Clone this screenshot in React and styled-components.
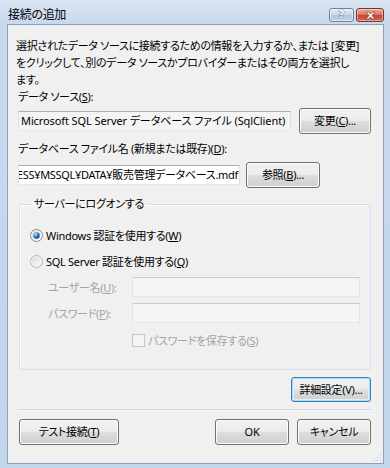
import React from "react"
import styled, { createGlobalStyle } from "styled-components"

const GlobalStyle = createGlobalStyle`
  html, body {
    margin: 0;
    padding: 0;
    background: #c4d5ea;
  }
  body {
    font-family: "Noto Sans", "Noto Sans CJK JP", sans-serif;
    font-size: 11px;
    letter-spacing: -0.3px;
    color: #000;
    font-feature-settings: "palt";
  }
`

const Window = styled.div`
  width: 390px;
  height: 468px;
  box-sizing: border-box;
  display: flex;
  flex-direction: column;
  padding: 0 6px 4px 7px;
  background: linear-gradient(#dae5f3 0, #c8d9ee 24px, #c3d5eb 100%);
`

const TitleBar = styled.div`
  height: 24px;
  display: flex;
  align-items: flex-start;
`

const Title = styled.div`
  margin: 7px 0 0 1px;
  line-height: 16px;
  font-size: 12px;
  flex: 1;
`

const CaptionButton = styled.div`
  margin-top: 8px;
  height: 14px;
  width: ${props => (props.$close ? 28 : 25)}px;
  margin-left: ${props => (props.$close ? 2 : 0)}px;
  box-sizing: border-box;
  border-radius: 3px;
  border: 1px solid ${props => (props.$close ? "#7d3427" : "#6e829c")};
  background: ${props =>
    props.$close
      ? "linear-gradient(#e7a899 0%, #d9806d 45%, #c4442f 50%, #d0685a 100%)"
      : "linear-gradient(#e5edf6 0%, #cbd8e8 45%, #b3c5db 50%, #c5d4e6 100%)"};
  box-shadow: inset 0 0 0 1px rgba(255, 255, 255, 0.45);
  display: flex;
  align-items: center;
  justify-content: center;
  color: #fff;
  font-family: "DejaVu Sans", sans-serif;
  font-weight: bold;
  font-size: 11px;
  letter-spacing: 0;
  line-height: 12px;
  text-shadow: 0 0 1px #3b4b61, 0 0 1px #3b4b61;
`

const Client = styled.div`
  flex: 1;
  position: relative;
  background: #f0f0f0;
  border: 1px solid #8ba1bd;
  padding: 12px 12px 0 10px;
  display: flex;
  flex-direction: column;
`

const Intro = styled.div`
  margin-left: -2px;
  line-height: 17px;
  white-space: nowrap;
`

const Line = styled.span`
  display: block;
`

const Label = styled.div`
  line-height: 16px;
  margin-top: ${props => props.$top}px;
  white-space: nowrap;
`

const Key = styled.span`
  text-decoration: underline;
  text-underline-offset: 1px;
`

const Row = styled.div`
  display: flex;
  align-items: center;
  gap: ${props => props.$gap}px;
  height: 26px;
  margin-top: ${props => props.$top}px;
`

const Field = styled.div`
  height: 20px;
  box-sizing: border-box;
  width: ${props => (props.$width ? `${props.$width}px` : "auto")};
  flex: ${props => (props.$width ? "none" : 1)};
  min-width: 0;
  border: 1px solid;
  border-color: ${props =>
    props.$disabled
      ? "#c9cbcf #dfe2e6 #e3e6ea #dfe2e6"
      : "#abadb3 #dbdfe6 #e3e9ef #e2e3ea"};
  background: ${props => (props.$white ? "#fff" : "#f4f4f4")};
  display: flex;
  align-items: center;
  justify-content: ${props => (props.$end ? "flex-end" : "flex-start")};
  padding: 0 ${props => (props.$end ? 1 : 2)}px 0 2px;
  overflow: hidden;
  white-space: nowrap;
  line-height: 16px;
  letter-spacing: ${props => (props.$end ? "-0.3px" : "-0.1px")};
`

const Button = styled.button`
  font: inherit;
  letter-spacing: inherit;
  color: #000;
  width: ${props => props.$w}px;
  height: ${props => props.$h || 26}px;
  flex: none;
  padding: 0;
  border-radius: 3px;
  border: 1px solid ${props => (props.$focused ? "#3c7fb1" : "#707070")};
  background: linear-gradient(#f2f2f2 0%, #ebebeb 48%, #dddddd 52%, #cfcfcf 100%);
  box-shadow: ${props =>
    props.$focused
      ? "inset 0 0 0 1px #9fdcf8, inset 0 0 0 2px #dff3fc"
      : "inset 0 0 0 1px #fbfbfb"};
  line-height: 16px;
  white-space: nowrap;
`

const Group = styled.fieldset`
  margin: 8px 0 0 1px;
  padding: 15px 10px 21px 10px;
  border: 1px solid #d5dfe5;
  border-radius: 3px;
  box-shadow: inset 1px 1px 0 #fff;
  min-width: 0;
`

const Legend = styled.legend`
  padding: 0 2px;
  margin-left: 2px;
  line-height: 16px;
`

const OptionRow = styled.label`
  display: flex;
  align-items: center;
  gap: 3px;
  height: 16px;
  margin-top: ${props => props.$top || 0}px;
  margin-left: ${props => props.$indent || 0}px;
  color: ${props => (props.$disabled ? "#a3a3a3" : "#000")};
  white-space: nowrap;
`

const CredRow = styled.div`
  display: flex;
  align-items: center;
  height: 20px;
  margin-top: ${props => props.$top}px;
  padding-left: 18px;
`

const CredLabel = styled.span`
  width: 84px;
  flex: none;
  color: #a3a3a3;
  white-space: nowrap;
`

const RightRow = styled.div`
  display: flex;
  justify-content: flex-end;
  margin-top: 7px;
`

const Separator = styled.div`
  height: 1px;
  background: #d5d5d5;
  margin-top: 7px;
  box-shadow: 0 1px 0 #fbfbfb;
`

const Footer = styled.div`
  display: flex;
  align-items: center;
  gap: 8px;
  margin-top: 9px;
`

const Spacer = styled.div`
  flex: 1;
`

const Grip = styled.svg`
  position: absolute;
  right: 1px;
  bottom: 1px;
`

const Radio = ({ checked }) => (
  <svg width="13" height="13" viewBox="0 0 13 13">
    <defs>
      <radialGradient id="rdot" cx="35%" cy="30%" r="75%">
        <stop offset="0" stopColor="#c6ecfd" />
        <stop offset="0.45" stopColor="#3d8fd6" />
        <stop offset="1" stopColor="#0b3b78" />
      </radialGradient>
      <linearGradient id="rbg" x1="0" y1="0" x2="1" y2="1">
        <stop offset="0" stopColor="#d6d6d6" />
        <stop offset="1" stopColor="#fdfdfd" />
      </linearGradient>
    </defs>
    <circle cx="6.5" cy="6.5" r="6" fill="#f6f6f6" stroke={checked ? "#8b8b8b" : "#b2b2b2"} />
    <circle cx="6.5" cy="6.5" r="4.6" fill="url(#rbg)" />
    {checked && <circle cx="6.5" cy="6.5" r="3.2" fill="url(#rdot)" />}
  </svg>
)

const CheckBox = () => (
  <svg width="13" height="13" viewBox="0 0 13 13">
    <rect x="0.5" y="0.5" width="12" height="12" fill="#f4f4f4" stroke="#c4c4c4" />
  </svg>
)

const CloseGlyph = () => (
  <svg width="11" height="9" viewBox="0 0 11 9">
    <path
      d="M1 1 L3.5 1 L5.5 3 L7.5 1 L10 1 L7 4.5 L10 8 L7.5 8 L5.5 6 L3.5 8 L1 8 L4 4.5 Z"
      fill="#fff"
      stroke="#6b2418"
      strokeWidth="0.6"
      strokeLinejoin="round"
    />
  </svg>
)

export default function App() {
  return (
    <>
      <GlobalStyle />
      <Window>
        <TitleBar>
          <Title>接続の追加</Title>
          <CaptionButton>?</CaptionButton>
          <CaptionButton $close>
            <CloseGlyph />
          </CaptionButton>
        </TitleBar>
        <Client>
          <Intro>
            <Line>選択されたデータ ソースに接続するための情報を入力するか、または [変更]</Line>
            <Line>をクリックして、別のデータ ソースかプロバイダーまたはその両方を選択し</Line>
            <Line>ます。</Line>
          </Intro>

          <Label $top={1}>
            データ ソース(<Key>S</Key>):
          </Label>
          <Row $top={3} $gap={8}>
            <Field>Microsoft SQL Server データベース ファイル (SqlClient)</Field>
            <Button $w={72}>
              変更(<Key>C</Key>)...
            </Button>
          </Row>

          <Label $top={7}>
            データベース ファイル名 (新規または既存)(<Key>D</Key>):
          </Label>
          <Row $top={5} $gap={6}>
            <Field $width={222} $white $end>
              <span>SQLEXPRESS¥MSSQL¥DATA¥販売管理データベース.mdf</span>
            </Field>
            <Button $w={74}>
              参照(<Key>B</Key>)...
            </Button>
          </Row>

          <Group>
            <Legend>サーバーにログオンする</Legend>
            <OptionRow>
              <Radio checked />
              <span>
                Windows 認証を使用する(<Key>W</Key>)
              </span>
            </OptionRow>
            <OptionRow $top={10}>
              <Radio />
              <span>
                SQL Server 認証を使用する(<Key>Q</Key>)
              </span>
            </OptionRow>
            <CredRow $top={8}>
              <CredLabel>
                ユーザー名(<Key>U</Key>):
              </CredLabel>
              <Field $disabled />
            </CredRow>
            <CredRow $top={6}>
              <CredLabel>
                パスワード(<Key>P</Key>):
              </CredLabel>
              <Field $disabled />
            </CredRow>
            <OptionRow $top={9} $indent={102} $disabled>
              <CheckBox />
              <span>
                パスワードを保存する(<Key>S</Key>)
              </span>
            </OptionRow>
          </Group>

          <RightRow>
            <Button $w={80} $h={25} $focused>
              詳細設定(V)...
            </Button>
          </RightRow>

          <Separator />

          <Footer>
            <Button $w={100} style={{ marginLeft: 1 }}>
              テスト接続(<Key>T</Key>)
            </Button>
            <Spacer />
            <Button $w={74}>OK</Button>
            <Button $w={74}>キャンセル</Button>
          </Footer>

          <Grip width="10" height="10" viewBox="0 0 10 10">
            <rect x="8" y="2" width="1" height="1" fill="#b8b8b8" />
            <rect x="5" y="5" width="1" height="1" fill="#b8b8b8" />
            <rect x="8" y="5" width="1" height="1" fill="#b8b8b8" />
            <rect x="2" y="8" width="1" height="1" fill="#b8b8b8" />
            <rect x="5" y="8" width="1" height="1" fill="#b8b8b8" />
            <rect x="8" y="8" width="1" height="1" fill="#b8b8b8" />
          </Grip>
        </Client>
      </Window>
    </>
  )
}
